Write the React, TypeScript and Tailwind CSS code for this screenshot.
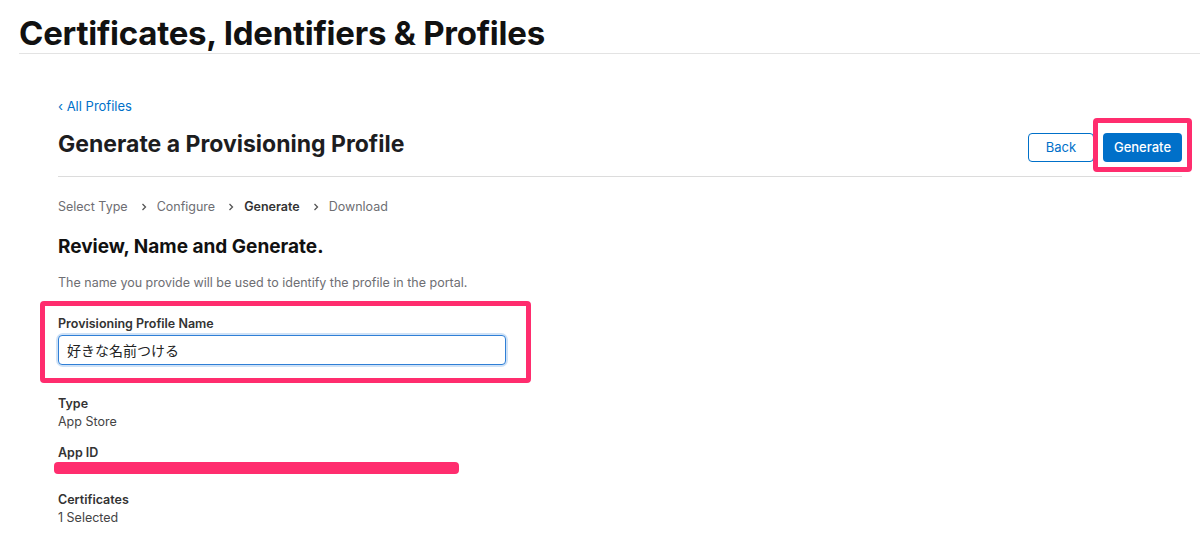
export default function App() {
	const steps = ['Select Type', 'Configure', 'Generate', 'Download'];

	return (
		<div
			className="w-[1200px] h-[547px] overflow-hidden bg-white text-[#1d1d1f]"
			style={{ fontFamily: 'Inter, "Noto Sans CJK JP", sans-serif' }}
		>
			<header className="pl-[19px] pt-[14px]">
				<h1 className="text-[33px] leading-[38px] font-bold tracking-[-0.25px] text-[#111]">
					Certificates, Identifiers &amp; Profiles
				</h1>
				<div className="mt-[1px] h-px bg-[#e3e3e3]" />
			</header>

			<main className="pl-[58px] pr-[18px]">
				<a href="#" className="mt-[44px] block text-[13px] leading-[17px] text-[#0070c9]">
					‹ All Profiles
				</a>

				<div className="mt-[14px] flex items-start justify-between">
					<h2 className="text-[23px] leading-[30px] font-bold text-[#1d1d1f]">
						Generate a Provisioning Profile
					</h2>
					<div className="mt-[4px] flex items-center gap-[9px]">
						<button className="h-[29px] w-[66px] rounded-[4px] border border-[#0070c9] text-[13px] text-[#0070c9]">
							Back
						</button>
						<div className="relative">
							<button className="h-[29px] w-[79px] rounded-[4px] bg-[#0070c9] text-[13px] font-medium text-white">
								Generate
							</button>
							{/* annotation box */}
							<div className="absolute -left-[10px] -right-[10px] -top-[15px] -bottom-[10px] rounded-[4px] border-[5px] border-[#ff2d6e]" />
						</div>
					</div>
				</div>

				<div className="mt-[14px] h-px bg-[#dcdcdc]" />

				<nav className="mt-[21px] flex items-center text-[12.5px] leading-[17px] text-[#6e6e73]">
					{steps.map((s, i) => (
						<span key={s} className="flex items-center">
							{i > 0 && (
								<svg className="ml-[12px] mr-[9px] w-[8px] h-[8px]" viewBox="0 0 8 8" fill="none" stroke="#555" strokeWidth="1.3">
									<polyline points="2.5 1 5.5 4 2.5 7" />
								</svg>
							)}
							<span className={s === 'Generate' ? 'font-semibold text-[#333]' : ''}>{s}</span>
						</span>
					))}
				</nav>

				<h3 className="mt-[20px] text-[19px] leading-[24px] font-bold text-[#111]">
					Review, Name and Generate.
				</h3>

				<p className="mt-[15px] text-[12.5px] leading-[17px] text-[#6e6e73]">
					The name you provide will be used to identify the profile in the portal.
				</p>

				<div className="mt-[10px] -ml-[18px] w-[491px] rounded-[4px] border-[5px] border-[#ff2d6e] pl-[13px] pr-[20px] pt-[10px] pb-[13px]">
					<label className="block text-[12.5px] leading-[16px] font-semibold text-[#333]">
						Provisioning Profile Name
					</label>
					<div className="mt-[3px] rounded-[5px] ring-[2px] ring-[#cfe2f7]">
						<input
							readOnly
							value="好きな名前つける"
							className="block h-[30px] w-full rounded-[4px] border border-[#2f7fd6] px-[8px] text-[14px] text-[#222] outline-none"
							style={{ fontFamily: '"Noto Sans CJK JP", sans-serif' }}
						/>
					</div>
				</div>

				<dl className="mt-[12px] text-[12.5px] leading-[18px]">
					<dt className="font-semibold text-[#333]">Type</dt>
					<dd className="text-[#444]">App Store</dd>

					<dt className="mt-[13px] font-semibold text-[#333]">App ID</dt>
					<dd className="-ml-[4px] h-[12px] w-[405px] rounded-[4px] bg-[#ff2d6e]" />

					<dt className="mt-[17px] font-semibold text-[#333]">Certificates</dt>
					<dd className="text-[#444]">1 Selected</dd>
				</dl>
			</main>
		</div>
	);
}
